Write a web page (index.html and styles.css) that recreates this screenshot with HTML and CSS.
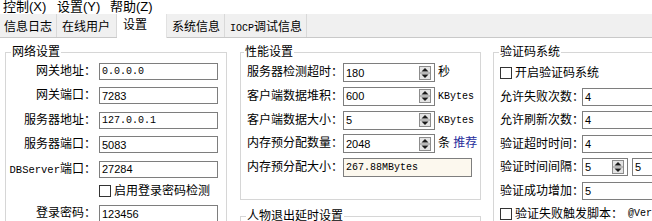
FILE: index.html
```html
<!DOCTYPE html>
<html lang="zh-CN">
<head>
<meta charset="utf-8">
<title>设置</title>
<link rel="stylesheet" href="styles.css">
</head>
<body>
<div class="menu">
  <span class="mi mi1">控制(X)</span>
  <span class="mi mi2">设置(Y)</span>
  <span class="mi">帮助(Z)</span>
</div>
<div class="tabs">
  <div class="tab t1">信息日志</div>
  <div class="tab t2">在线用户</div>
  <div class="tab t3 active">设置</div>
  <div class="tab t4">系统信息</div>
  <div class="tab t5"><span class="mono">IOCP</span>调试信息</div>
</div>
<div class="content">
  <fieldset class="grp g1">
    <legend class="lg lg1">网络设置</legend>
    <div class="form f1">
      <span class="lbl">网关地址：</span><div class="inp mono">0.0.0.0</div>
      <span class="lbl">网关端口：</span><div class="inp">7283</div>
      <span class="lbl">服务器地址：</span><div class="inp mono">127.0.0.1</div>
      <span class="lbl">服务器端口：</span><div class="inp">5083</div>
      <span class="lbl"><span class="mono dbs">DBServer</span>端口：</span><div class="inp">27284</div>
      <span class="lbl"></span><div class="chk"><span class="box"></span>启用登录密码检测</div>
      <span class="lbl">登录密码：</span><div class="inp">123456</div>
    </div>
  </fieldset>
  <div class="col">
    <fieldset class="grp g2">
      <legend class="lg lg2">性能设置</legend>
      <div class="form f2">
        <span class="lbl2">服务器检测超时：</span>
        <div class="inp spinbox"><span class="val">180</span><svg class="spin" width="12" height="14" viewBox="0 0 12 14"><rect x="0.5" y="0.5" width="11" height="13" fill="#e4e4e4" stroke="#8c8c8c"/><line x1="1" y1="7" x2="11" y2="7" stroke="#8c8c8c"/><path d="M2.5 5.5 L6 2 L9.5 5.5Z" fill="#1a1a1a"/><path d="M2.5 8.5 L6 12 L9.5 8.5Z" fill="#1a1a1a"/></svg></div>
        <span class="unit">秒</span>
        <span class="lbl2">客户端数据堆积：</span>
        <div class="inp spinbox"><span class="val">600</span><svg class="spin" width="12" height="14" viewBox="0 0 12 14"><rect x="0.5" y="0.5" width="11" height="13" fill="#e4e4e4" stroke="#8c8c8c"/><line x1="1" y1="7" x2="11" y2="7" stroke="#8c8c8c"/><path d="M2.5 5.5 L6 2 L9.5 5.5Z" fill="#1a1a1a"/><path d="M2.5 8.5 L6 12 L9.5 8.5Z" fill="#1a1a1a"/></svg></div>
        <span class="unit mono">KBytes</span>
        <span class="lbl2">客户端数据大小：</span>
        <div class="inp spinbox"><span class="val">5</span><svg class="spin" width="12" height="14" viewBox="0 0 12 14"><rect x="0.5" y="0.5" width="11" height="13" fill="#e4e4e4" stroke="#8c8c8c"/><line x1="1" y1="7" x2="11" y2="7" stroke="#8c8c8c"/><path d="M2.5 5.5 L6 2 L9.5 5.5Z" fill="#1a1a1a"/><path d="M2.5 8.5 L6 12 L9.5 8.5Z" fill="#1a1a1a"/></svg></div>
        <span class="unit mono">KBytes</span>
        <span class="lbl2">内存预分配数量：</span>
        <div class="inp spinbox"><span class="val">2048</span><svg class="spin" width="12" height="14" viewBox="0 0 12 14"><rect x="0.5" y="0.5" width="11" height="13" fill="#e4e4e4" stroke="#8c8c8c"/><line x1="1" y1="7" x2="11" y2="7" stroke="#8c8c8c"/><path d="M2.5 5.5 L6 2 L9.5 5.5Z" fill="#1a1a1a"/><path d="M2.5 8.5 L6 12 L9.5 8.5Z" fill="#1a1a1a"/></svg></div>
        <span class="unit">条 <span class="link">推荐</span></span>
        <span class="lbl2">内存预分配大小：</span>
        <div class="inp ro mono">267.88MBytes</div>
      </div>
    </fieldset>
    <fieldset class="grp g3">
      <legend class="lg lg3">人物退出延时设置</legend>
    </fieldset>
  </div>
  <fieldset class="grp g4">
    <legend class="lg lg4">验证码系统</legend>
    <div class="form f4">
      <div class="chk wide"><span class="box"></span>开启验证码系统</div>
      <span class="lbl4">允许失败次数：</span><div class="inp">4</div>
      <span class="lbl4">允许刷新次数：</span><div class="inp">4</div>
      <span class="lbl4">验证超时时间：</span><div class="inp">4</div>
      <span class="lbl4">验证时间间隔：</span>
      <div class="pair">
        <div class="inp spinbox small"><span class="val">5</span><svg class="spin" width="12" height="14" viewBox="0 0 12 14"><rect x="0.5" y="0.5" width="11" height="13" fill="#e4e4e4" stroke="#8c8c8c"/><line x1="1" y1="7" x2="11" y2="7" stroke="#8c8c8c"/><path d="M2.5 5.5 L6 2 L9.5 5.5Z" fill="#1a1a1a"/><path d="M2.5 8.5 L6 12 L9.5 8.5Z" fill="#1a1a1a"/></svg></div>
        <div class="inp second">5</div>
      </div>
      <span class="lbl4">验证成功增加：</span><div class="inp">5</div>
      <div class="chk wide"><span class="box"></span>验证失败触发脚本：<span class="mono script">@Ver</span></div>
    </div>
  </fieldset>
</div>
</body>
</html>
```
FILE: styles.css
```css
html, body {
  margin: 0;
  padding: 0;
}
body {
  width: 652px;
  height: 221px;
  overflow: hidden;
  background: #ffffff;
  color: #000000;
  font-family: "Liberation Sans", "Noto Sans CJK SC", sans-serif;
  font-size: 12px;
}
.mono {
  font-family: "Liberation Mono", "Noto Sans CJK SC", monospace;
  font-size: 10px;
}

/* menu */
.menu {
  height: 14px;
  display: flex;
  padding-left: 3px;
  font-size: 13px;
  line-height: 14px;
  white-space: nowrap;
  background: #ffffff;
}
.mi1 { width: 54px; }
.mi2 { width: 53px; }

/* tabs */
.tabs {
  height: 23px;
  display: flex;
  background: #f0f0f0;
  border-bottom: 1px solid #c9c9c9;
  white-space: nowrap;
}
.tab {
  box-sizing: border-box;
  flex: none;
  height: 23px;
  line-height: 23px;
  padding-top: 2px;
  border-right: 1px solid #d9d9d9;
}
.t1 { width: 57px; padding-left: 4px; }
.t2 { width: 60px; padding-left: 5px; }
.t3 { width: 50px; padding-left: 6px; }
.t4 { width: 58px; padding-left: 5px; }
.t5 { width: 82px; padding-left: 5px; }
.tab.active {
  background: #ffffff;
  height: 24px;
  margin-bottom: -1px;
  padding-top: 0;
  border-right: 1px solid #e2e2e2;
  position: relative;
}

/* content */
.content {
  display: flex;
  align-items: flex-start;
  padding-top: 7px;
}
.content > * { flex: none; }
.grp {
  box-sizing: border-box;
  margin: 0;
  padding: 0;
  min-inline-size: 0;
  border: 1px solid #d6d6d6;
}
.lg {
  padding: 0 1px;
  font-size: 12px;
  line-height: 14px;
}
.g1 { margin-left: 5px; width: 222px; height: 300px; }
.lg1 { margin-left: 5px; }
.col { margin-left: 13px; display: flex; flex-direction: column; }
.g2 { width: 241px; height: 155px; }
.lg2 { margin-left: 3px; }
.g3 { width: 241px; height: 80px; margin-top: 9px; }
.lg3 { margin-left: 5px; }
.g4 { margin-left: 12px; width: 200px; height: 300px; }
.lg4 { margin-left: 5px; }

.form { display: grid; white-space: nowrap; }
.inp {
  box-sizing: border-box;
  height: 100%;
  border: 1px solid #7e7e7e;
  background: #ffffff;
  padding-left: 2px;
  display: flex;
  align-items: center;
  font-size: 11px;
}
.inp.mono { font-size: 10px; }

.f1 {
  padding-top: 4px;
  grid-template-columns: 90px 119px;
  grid-template-rows: repeat(5, 17px) 13px 17px;
  column-gap: 3px;
  row-gap: 7.4px;
}
.lbl { text-align: right; line-height: 17px; }
.dbs { font-size: 10.5px; }

.chk { display: flex; align-items: center; gap: 3px; line-height: 13px; }
.box {
  box-sizing: border-box;
  width: 12px;
  height: 12px;
  border: 1px solid #333333;
  background: #ffffff;
  flex: none;
}

.f2 {
  padding-top: 4px;
  padding-left: 6px;
  grid-template-columns: 96px 92px auto;
  grid-auto-rows: 19px;
  row-gap: 4.8px;
}
.lbl2 { line-height: 19px; }
.spinbox { justify-content: space-between; padding-right: 3px; }
.spin { display: block; flex: none; }
.unit { line-height: 19px; margin-left: 3px; }
.unit.mono { font-size: 10px; }
.link { color: #1f2d9c; }
.ro {
  grid-column: 2 / 4;
  width: 129px;
  background: #fcf8ee;
}

.f4 {
  padding-top: 5px;
  padding-left: 6px;
  grid-template-columns: 82px 120px;
  grid-auto-rows: 18px;
  row-gap: 5.5px;
}
.f4 .wide { grid-column: 1 / 3; line-height: 18px; }
.lbl4 { line-height: 18px; }
.pair { display: flex; gap: 4px; }
.small { width: 46px; flex: none; }
.second { width: 60px; flex: none; }
.script { margin-left: 2px; }
```
